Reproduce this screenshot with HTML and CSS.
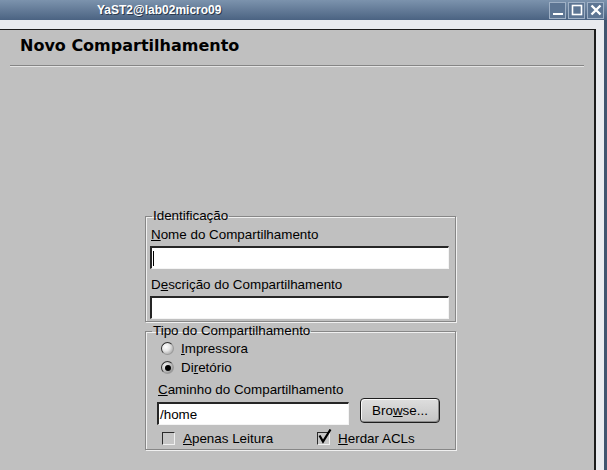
FILE: index.html
```html
<!DOCTYPE html>
<html lang="pt">
<head>
  <meta charset="UTF-8">
  <title>YaST2@lab02micro09</title>
  <link rel="stylesheet" href="styles.css">
</head>
<body>

<div class="window">
  <div class="titlebar">
    <span class="title">YaST2@lab02micro09</span>
    <div class="wm-buttons">
      <span class="wm-btn"><svg width="14" height="14" viewBox="0 0 14 14"><rect x="2" y="10" width="10" height="2" fill="#fff"/></svg></span>
      <span class="wm-btn"><svg width="14" height="14" viewBox="0 0 14 14"><rect x="2.5" y="2.5" width="9" height="9" fill="none" stroke="#fff" stroke-width="1.6"/></svg></span>
      <span class="wm-btn"><svg width="14" height="14" viewBox="0 0 14 14"><path d="M2.5 2.5 L11.5 11.5 M11.5 2.5 L2.5 11.5" stroke="#fff" stroke-width="2.4"/></svg></span>
    </div>
  </div>

  <div class="frame">
    <div class="client">
      <h1 class="heading">Novo Compartilhamento</h1>
      <div class="hline"></div>

      <div class="dialog">
        <fieldset class="group">
          <legend>Identificação</legend>
          <label class="label"><u>N</u>ome do Compartilhamento</label>
          <div class="input"><span class="caret"></span></div>
          <label class="label second">D<u>e</u>scrição do Compartilhamento</label>
          <div class="input"></div>
        </fieldset>

        <fieldset class="group type">
          <legend>Tipo do Compartilhamento</legend>
          <div class="inner">
            <div class="radio-row first"><span class="radio"></span><span><u>I</u>mpressora</span></div>
            <div class="radio-row"><span class="radio checked"></span><span>Di<u>r</u>etório</span></div>
            <label class="label path-label"><u>C</u>aminho do Compartilhamento</label>
            <div class="path-row">
              <div class="input path">/home</div>
              <button class="browse">Bro<u>w</u>se...</button>
            </div>
            <div class="check-row">
              <span class="check-item"><span class="check"></span><span><u>A</u>penas Leitura</span></span>
              <span class="check-item herdar">
                <span class="check">
                  <svg width="16" height="16" viewBox="0 0 16 16"><path d="M2.5 6.5 L6 12.5 L13.5 0.5" fill="none" stroke="#000" stroke-width="2.2"/></svg>
                </span>
                <span><u>H</u>erdar ACLs</span>
              </span>
            </div>
          </div>
        </fieldset>
      </div>
    </div>
  </div>
</div>

</body>
</html>
```

FILE: styles.css
```css
body {
  margin: 0;
  background: #e9ebef;
  font-family: "Liberation Sans", Arial, sans-serif;
  font-size: 13.4px;
  color: #000;
  overflow: hidden;
}

.window {
  height: 470px;
  display: flex;
  flex-direction: column;
}

.titlebar {
  height: 20px;
  flex: none;
  background: linear-gradient(#7c93ad, #4b6382);
  display: flex;
  align-items: center;
}

.title {
  padding-left: 97px;
  color: #fff;
  font-family: "Liberation Sans", Arial, sans-serif;
  font-weight: bold;
  font-size: 12px;
  text-shadow: 1px 1px 0 #2c3a4e;
}

.wm-buttons {
  margin-left: auto;
  margin-right: 3px;
  display: flex;
  gap: 2px;
}

.wm-btn {
  width: 15px;
  height: 15px;
  border: 1px solid #9fb0c5;
  background: #5d7593;
  display: flex;
  align-items: center;
  justify-content: center;
}

.frame {
  flex: 1;
  display: flex;
  padding: 9px 8px 0 0;
  border-right: 3px solid #40556f;
  background: #e9ebef;
}

.client {
  flex: 1;
  background: #c0c0c0;
  border-top: 1px solid #1c1c1c;
  border-right: 2px solid #1c1c1c;
}

.heading {
  margin: 0;
  padding: 6px 0 0 20px;
  font-family: "DejaVu Sans", sans-serif;
  font-size: 16px;
  font-weight: bold;
  height: 29px;
}

.hline {
  margin: 0 10px;
  border-top: 1px solid #858585;
  border-bottom: 1px solid #e4e4e4;
}

.dialog {
  margin: 142px 0 0 145px;
  width: 311px;
}

.group {
  margin: 0;
  padding: 0 5px 2px 5px;
  border: 1px solid #878787;
  box-shadow: inset 1px 1px 0 #f0f0f0, 1px 1px 0 #f0f0f0;
}

.group legend {
  padding: 0 1px;
  margin-left: 1px;
  line-height: 14px;
}

.label {
  display: block;
  margin-top: 4px;
  line-height: 16px;
}

.label.second {
  margin-top: 8px;
}

.input {
  height: 20px;
  margin: 3px 0 0 -1px;
  width: 296px;
  background: #fff;
  border-top: 2px solid #262626;
  border-left: 2px solid #262626;
  border-right: 1px solid #f4f4f4;
  border-bottom: 1px solid #f4f4f4;
  display: flex;
  align-items: center;
}

.caret {
  width: 1px;
  height: 15px;
  margin-left: 1px;
  background: #000;
}

.type {
  margin-top: 2px;
  padding-bottom: 2px;
}

.inner {
  padding-left: 11px;
}

.radio-row {
  display: flex;
  align-items: center;
  gap: 7px;
  height: 19px;
  margin-left: -1px;
}

.radio-row.first {
  margin-top: 1px;
}

.radio {
  width: 11px;
  height: 11px;
  border-radius: 50%;
  border: 1px solid #303030;
  border-bottom-color: #9a9a9a;
  border-right-color: #9a9a9a;
  background: radial-gradient(circle at 35% 35%, #ffffff 0%, #e6e6e6 40%, #8c8c8c 100%);
  display: flex;
  align-items: center;
  justify-content: center;
}

.radio.checked {
  background: radial-gradient(circle at 35% 35%, #f4f4f4 0%, #c8c8c8 45%, #707070 100%);
}

.radio.checked::after {
  content: "";
  width: 6px;
  height: 6px;
  border-radius: 50%;
  background: #000;
}

.path-label {
  margin-top: 5px;
  margin-left: -4px;
}

.path-row {
  display: flex;
  align-items: flex-start;
  margin-left: -5px;
  gap: 11px;
}

.input.path {
  width: 188px;
  margin: 4px 0 0 0;
  padding-left: 1px;
}

.browse {
  width: 80px;
  height: 25px;
  padding: 0;
  font: inherit;
  color: #000;
  background: linear-gradient(#dedede, #c4c4c4);
  border: 1px solid #1e1e1e;
  border-radius: 4px;
  box-shadow: inset 1px 1px 0 #f8f8f8, inset -1px -1px 0 #8c8c8c;
}

.check-row {
  display: flex;
  margin-top: 4px;
  height: 18px;
  align-items: center;
}

.check-item {
  display: flex;
  align-items: center;
  gap: 8px;
}

.check-item.herdar {
  margin-left: 44px;
}

.check {
  width: 11px;
  height: 11px;
  border-top: 1px solid #2b2b2b;
  border-left: 1px solid #2b2b2b;
  border-right: 1px solid #f0f0f0;
  border-bottom: 1px solid #f0f0f0;
  background: #c6c6c6;
  position: relative;
}

.check svg {
  position: absolute;
  left: -1px;
  top: -4px;
}
```
